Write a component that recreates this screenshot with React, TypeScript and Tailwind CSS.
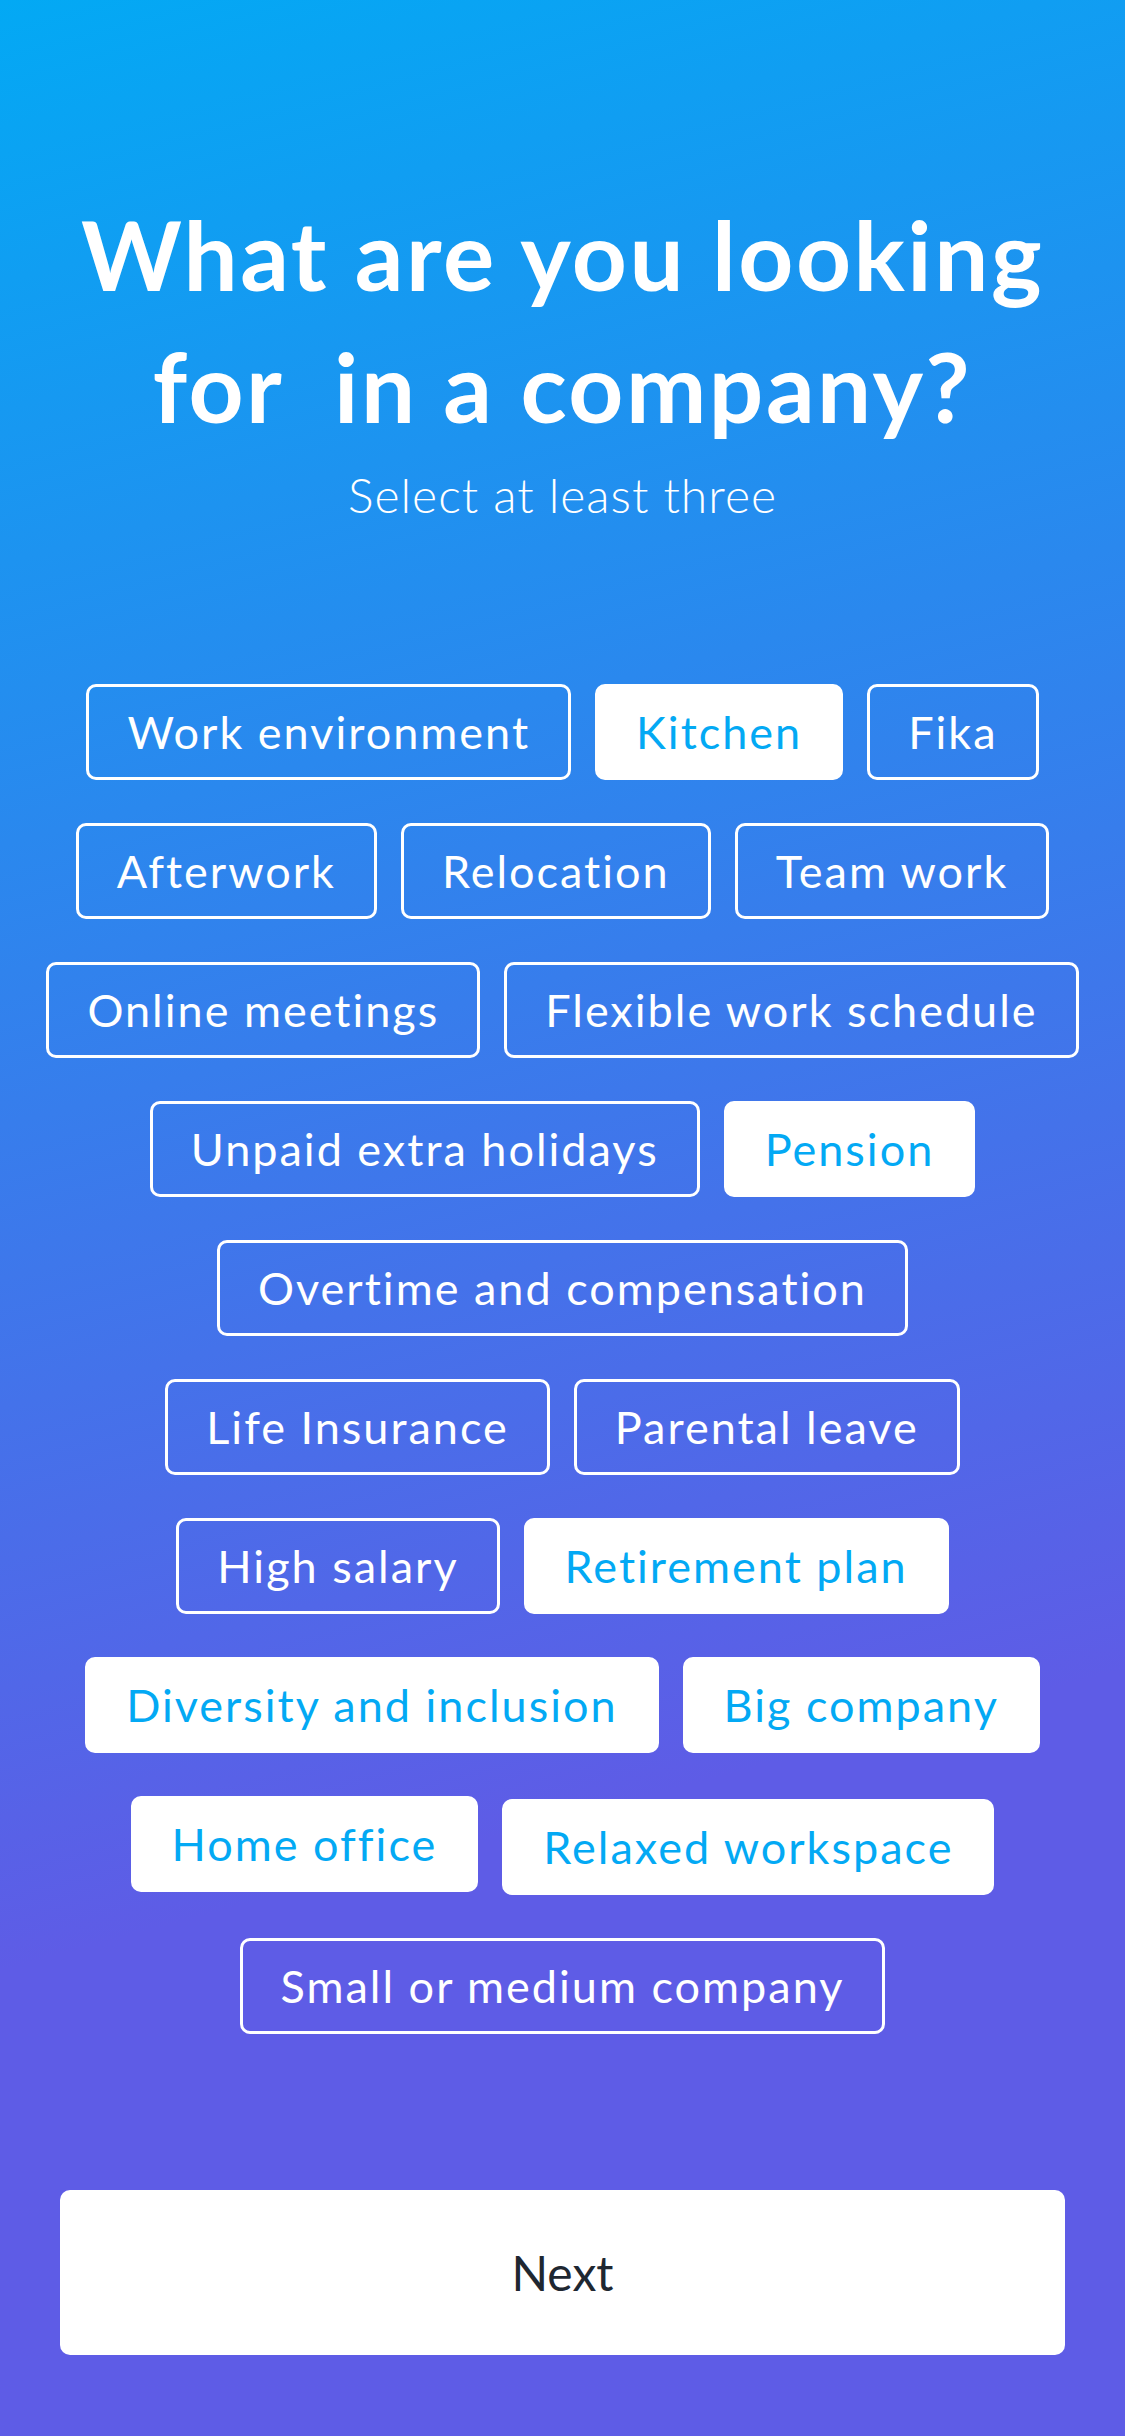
import { useState } from "react";

type Perk = { label: string; nudge?: boolean };

const PERK_ROWS: Perk[][] = [
  [{ label: "Work environment" }, { label: "Kitchen" }, { label: "Fika" }],
  [{ label: "Afterwork" }, { label: "Relocation" }, { label: "Team work" }],
  [{ label: "Online meetings" }, { label: "Flexible work schedule" }],
  [{ label: "Unpaid extra holidays" }, { label: "Pension" }],
  [{ label: "Overtime and compensation" }],
  [{ label: "Life Insurance" }, { label: "Parental leave" }],
  [{ label: "High salary" }, { label: "Retirement plan" }],
  [{ label: "Diversity and inclusion" }, { label: "Big company" }],
  [{ label: "Home office" }, { label: "Relaxed workspace", nudge: true }],
  [{ label: "Small or medium company" }],
];

const INITIAL_SELECTED = [
  "Kitchen",
  "Pension",
  "Retirement plan",
  "Diversity and inclusion",
  "Big company",
  "Home office",
  "Relaxed workspace",
];

export default function App() {
  const [selected, setSelected] = useState<string[]>(INITIAL_SELECTED);

  const toggle = (label: string) =>
    setSelected((prev) =>
      prev.includes(label)
        ? prev.filter((item) => item !== label)
        : [...prev, label],
    );

  return (
    <div className="flex min-h-[2436px] w-full flex-col items-center bg-[linear-gradient(165deg,#03a9f4_0%,#5e5ce6_72%)] font-['Lato','Noto_Sans',sans-serif] text-white">
      <h1 className="pt-[188px] text-center text-[96px] font-bold leading-[132px] tracking-[2.5px] whitespace-pre">
        {"What are you looking\nfor\u00a0 in a company?"}
      </h1>
      <p className="mt-[14px] text-[48px] font-light leading-[58px] tracking-[1px]">
        Select at least three
      </p>

      <div className="mt-[160px] flex w-full flex-col gap-[43px]">
        {PERK_ROWS.map((row, i) => (
          <div className="flex items-start justify-center gap-6" key={i}>
            {row.map(({ label, nudge }) => {
              const isOn = selected.includes(label);
              return (
                <button
                  className={`flex h-[96px] items-center whitespace-nowrap rounded-[10px] border-[3px] border-white px-[38px] text-[45px] leading-none tracking-[2px] ${
                    isOn ? "bg-white text-[#03a9f4]" : "bg-transparent text-white"
                  } ${nudge ? "mt-[3px]" : ""}`}
                  key={label}
                  onClick={() => toggle(label)}
                  type="button"
                >
                  {label}
                </button>
              );
            })}
          </div>
        ))}
      </div>

      <button
        className="mx-[60px] mt-[156px] mb-[81px] flex h-[165px] w-[1005px] items-center justify-center rounded-[10px] bg-white text-[48px] text-[#1e2731]"
        type="button"
      >
        Next
      </button>
    </div>
  );
}
